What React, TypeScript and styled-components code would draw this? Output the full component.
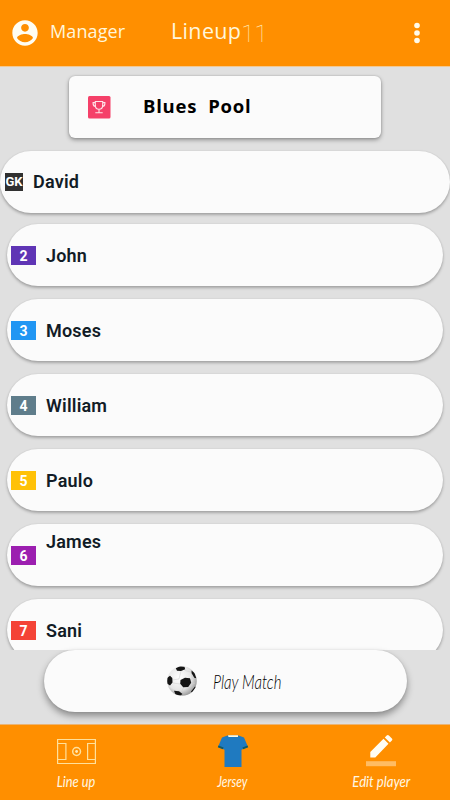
import React from 'react';
import styled, { createGlobalStyle } from 'styled-components';

const GlobalStyle = createGlobalStyle`
  * { box-sizing: border-box; }
  body { margin: 0; background: #e0e0e0; }
`;

const Screen = styled.div`
  width: 450px;
  height: 800px;
  display: flex;
  flex-direction: column;
  overflow: hidden;
  background: #e0e0e0;
  font-family: Roboto, sans-serif;
`;

const Header = styled.header`
  height: 66px;
  flex: none;
  display: flex;
  align-items: center;
  background: #ff8f00;
  color: #fff6dc;
  padding: 0 21px 0 9px;
  box-shadow: 0 1px 0 #f3c891;
  font-family: 'Open Sans', sans-serif;
  svg { flex: none; }
`;

const Manager = styled.span`
  width: 130px;
  padding-left: 9px;
  margin-top: -4px;
  font-size: 18px;
  letter-spacing: 0.1px;
`;

const Brand = styled.h1`
  flex: 1;
  display: flex;
  align-items: baseline;
  margin: -5px 0 0;
  font-size: 21.5px;
  font-weight: 400;
  letter-spacing: 0.35px;
`;

const BrandNumber = styled.span`
  font-family: Roboto, sans-serif;
  font-weight: 100;
  font-size: 24px;
  line-height: 20px;
  letter-spacing: 0;
  color: #ffe6ad;
  transform: translateY(3px);
`;

const TeamCard = styled.section`
  flex: none;
  width: 312px;
  height: 62px;
  margin: 10px 0 0 69px;
  padding-left: 18px;
  display: flex;
  align-items: center;
  border-radius: 6px;
  background: #fbfbfb;
  box-shadow: 0 2px 4px rgba(0, 0, 0, 0.35), 0 0 2px rgba(0, 0, 0, 0.2);
`;

const TeamName = styled.h2`
  margin: -4px 0 0 32px;
  font-family: 'Open Sans', sans-serif;
  font-size: 18.5px;
  font-weight: 700;
  letter-spacing: 0.75px;
  white-space: pre;
  color: #000;
`;

const List = styled.ul`
  list-style: none;
  margin: 0;
  padding: 13px 0 0;
  height: 512px;
  flex: none;
  overflow: hidden;
`;

const Row = styled.li<{ $keeper?: boolean }>`
  display: flex;
  align-items: center;
  height: 62px;
  margin: ${p => (p.$keeper ? '0 0 11px' : '0 7px 13px')};
  padding-left: ${p => (p.$keeper ? '5px' : '4px')};
  border-radius: 31px;
  background: #fbfbfb;
  box-shadow: 0 2px 3px rgba(0, 0, 0, 0.26), 0 0 2px rgba(0, 0, 0, 0.1);
`;

const Badge = styled.span<{ $color: string; $keeper?: boolean }>`
  flex: none;
  display: flex;
  align-items: center;
  justify-content: center;
  width: ${p => (p.$keeper ? 18 : 25)}px;
  height: ${p => (p.$keeper ? 18 : 19)}px;
  margin-top: ${p => (p.$keeper ? -1 : 1)}px;
  padding-top: 1px;
  background: ${p => p.$color};
  color: #fff;
  font-size: ${p => (p.$keeper ? 13 : 14)}px;
  line-height: 16px;
  font-weight: 700;
`;

const Name = styled.span<{ $raised?: boolean; $keeper?: boolean }>`
  margin: ${p => (p.$raised ? '-27px' : p.$keeper ? '0' : '2px')} 0 0 10px;
  font-size: 18px;
  letter-spacing: 0.2px;
  line-height: 24px;
  font-weight: 600;
  color: #121c26;
`;

const PlayButton = styled.button`
  flex: none;
  width: 363px;
  height: 62px;
  margin: 0 0 0 44px;
  padding: 0 0 0 122px;
  border: 0;
  border-radius: 31px;
  display: flex;
  align-items: center;
  gap: 15px;
  background: #fbfbfb;
  box-shadow: 0 4px 7px rgba(0, 0, 0, 0.38), 0 0 2px rgba(0, 0, 0, 0.1);
`;

const Script = styled.span<{ $size: number; $squeeze: number }>`
  display: block;
  font-family: Lato, sans-serif;
  font-style: italic;
  font-weight: ${p => (p.$size > 18 ? 300 : 400)};
  font-size: ${p => p.$size}px;
  line-height: 20px;
  white-space: nowrap;
  transform-origin: ${p => (p.$size > 18 ? 'left' : 'center')};
  transform: scaleX(${p => p.$squeeze});
`;

const Nav = styled.nav`
  flex: none;
  height: 75px;
  margin-top: 13px;
  display: grid;
  grid-template-columns: 153px 159px 138px;
  background: #ff8f00;
  box-shadow: 0 -1px 0 #eab475;
`;

const Tab = styled.a`
  display: flex;
  flex-direction: column;
  align-items: center;
  padding-top: 8px;
  color: #fff8e5;
  svg { display: block; margin-bottom: 3px; }
`;

const players = [
  { no: 'GK', name: 'David', color: '#303030' },
  { no: '2', name: 'John', color: '#5f35b5' },
  { no: '3', name: 'Moses', color: '#2196f3' },
  { no: '4', name: 'William', color: '#5f7d8b' },
  { no: '5', name: 'Paulo', color: '#ffc107' },
  { no: '6', name: 'James', color: '#9c1fb0', raised: true },
  { no: '7', name: 'Sani', color: '#f44336' },
];

const AccountIcon = () => (
  <svg width="32" height="32" viewBox="0 0 24 24" fill="#fffdf2">
    <path d="M12 2.500C6.760 2.500 2.500 6.760 2.500 12s4.260 9.500 9.500 9.500 9.500-4.260 9.500-9.500S17.240 2.500 12 2.500zm0 2.700c1.660 0 2.900 1.240 2.900 2.900s-1.240 2.900-2.900 2.900-2.900-1.240-2.900-2.900 1.240-2.900 2.900-2.900zm0 13.800c-2.500 0-4.710-1.280-6-3.220.03-1.990 4-3.080 6-3.080 1.990 0 5.970 1.090 6 3.080-1.290 1.940-3.500 3.220-6 3.220z" />
  </svg>
);

const MoreIcon = () => (
  <svg width="24" height="24" viewBox="0 0 24 24" fill="#fffbea">
    <circle cx="12" cy="4.500" r="2.800" />
    <circle cx="12" cy="12" r="2.800" />
    <circle cx="12" cy="19.500" r="2.800" />
  </svg>
);

const TrophyIcon = () => (
  <svg width="24" height="24" viewBox="0 0 24 24" fill="none" stroke="#ffe3e8" strokeWidth="1.100">
    <rect x="1" y="1" width="22.500" height="22.500" rx="1.500" fill="#f54069" stroke="none" />
    <path d="M8.300 6.500h7.400v3.800c0 2.200-1.500 4-3.700 4s-3.700-1.800-3.700-4zM8.300 7.600H6.100v1c0 1.900 1.100 3 2.600 3M15.700 7.600h2.200v1c0 1.900-1.100 3-2.600 3M12 14.300v3M8.300 17.700h7.400" />
  </svg>
);

const BallIcon = () => (
  <svg width="32" height="32" viewBox="0 0 32 32">
    <defs>
      <radialGradient id="ball" cx=".4" cy=".38" r=".65">
        <stop offset="0" stopColor="#fff" />
        <stop offset=".65" stopColor="#e5e5e5" />
        <stop offset="1" stopColor="#999" />
      </radialGradient>
      <clipPath id="ballEdge"><circle cx="16" cy="16" r="14.800" /></clipPath>
    </defs>
    <circle cx="16" cy="16" r="14.800" fill="url(#ball)" />
    <g clipPath="url(#ballEdge)">
      <path d="M15 6l-2 8-7 1M19 5.500l6 1.500 1 7-2 2M7 18l7 1M18 22l-3 5M24 20l5-2" fill="none" stroke="#d2d2d2" strokeWidth=".6" />
      <path d="M14.500 15 19 12.800 24 13.300 25.200 17.800 22.200 22 17.200 22.200 14.200 18.800zM9.800 3.300 14 1.200 18.500 1.800 19.200 4.200 15 6 11 5.800zM1 13 4 10.800 6.300 13 6.500 17.500 4 20.500 1 18.500zM25.500 5.500 28.500 8l1.800 5.200-2-.5-2.700-4.500zM8 25.800l5 .5 3.500 2.700-2 1.500-5-1zM25 26.500l4-5 1 1L26 28.500z" fill="#151515" />
    </g>
  </svg>
);

const PitchIcon = () => (
  <svg width="40" height="35" viewBox="0 0 40 35" fill="none" stroke="#ffe09b" strokeWidth="1.200">
    <path d="M.6 6.500h37.800v24H.6zM.6 10.500h8.300v16H.6M38.400 10.500h-7.800v16h7.800" />
    <circle cx="19.600" cy="18.500" r="3.900" strokeWidth="1.500" />
    <circle cx="19.600" cy="18.500" r="1.400" fill="#ffe9b8" stroke="none" />
  </svg>
);

const JerseyIcon = () => (
  <svg width="34" height="35" viewBox="0 0 34 35">
    <path d="M11.500 2.500 6 4.500 2 14l6.500 2.700V34h17V16.700L32 14 28 4.500l-5.500-2z" fill="#1f7ac0" />
    <path d="m2.500 12.500-.7 1.700 5 2.100.8-1.700zM31.500 12.500l.7 1.700-5 2.100-.8-1.700z" fill="#135b63" />
    <path d="M12 2.200h10V4H12.500z" fill="#fff8dc" />
  </svg>
);

const PencilIcon = () => (
  <svg width="32" height="35" viewBox="0 0 32 35">
    <path d="M5.300 19 18.500 5.800l5 5L10.300 24.500h-5zM19.800 4.500l1.900-1.900c.7-.7 1.500-.7 2.200 0l3 3c.6.600.6 1.300 0 2l-2 2z" fill="#fffdf3" />
    <path d="M1 28.200h30v5H1z" fill="#ffbc63" />
  </svg>
);

export default function App() {
  return (
    <>
      <GlobalStyle />
      <Screen>
        <Header>
          <AccountIcon />
          <Manager>Manager</Manager>
          <Brand>Lineup<BrandNumber>11</BrandNumber></Brand>
          <MoreIcon />
        </Header>
        <TeamCard>
          <TrophyIcon />
          <TeamName>Blues  Pool</TeamName>
        </TeamCard>
        <List>
          {players.map(p => (
            <Row key={p.no} $keeper={p.no === 'GK'}>
              <Badge $color={p.color} $keeper={p.no === 'GK'}>{p.no}</Badge>
              <Name $raised={p.raised} $keeper={p.no === 'GK'}>{p.name}</Name>
            </Row>
          ))}
        </List>
        <PlayButton>
          <BallIcon />
          <Script $size={20} $squeeze={0.75}>Play Match</Script>
        </PlayButton>
        <Nav>
          <Tab><PitchIcon /><Script $size={16} $squeeze={0.8}>Line up</Script></Tab>
          <Tab><JerseyIcon /><Script $size={16} $squeeze={0.74}>Jersey</Script></Tab>
          <Tab><PencilIcon /><Script $size={16} $squeeze={0.82}>Edit player</Script></Tab>
        </Nav>
      </Screen>
    </>
  );
}
